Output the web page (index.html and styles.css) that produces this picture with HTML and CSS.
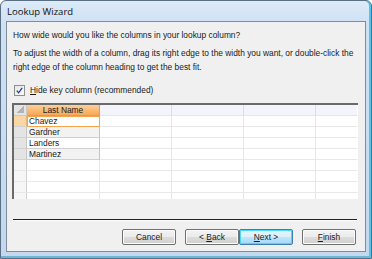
FILE: index.html
```html
<!DOCTYPE html>
<html>
<head>
<meta charset="utf-8">
<link rel="stylesheet" href="styles.css">
</head>
<body>
<div class="window">
  <div class="titlebar">Lookup Wizard</div>
  <div class="client">
    <p class="question">How wide would you like the columns in your lookup column?</p>
    <p class="help">To adjust the width of a column, drag its right edge to the width you want, or double-click the<br>right edge of the column heading to get the best fit.</p>
    <div class="check">
      <span class="box"><svg width="9" height="9" viewBox="0 0 9 9"><path d="M1.8 4.6 L3.6 6.8 L7.2 1.8" fill="none" stroke="#2a3e8c" stroke-width="1.3"/></svg></span>
      <span class="label"><u>H</u>ide key column (recommended)</span>
    </div>
    <div class="grid">
      <div class="hd corner"><span class="tri"></span></div>
      <div class="hd sel-col">Last Name</div>
      <div class="hd"></div><div class="hd"></div><div class="hd"></div><div class="hd last"></div>

      <div class="rs cur"></div><div class="c name active">Chavez</div><div class="c"></div><div class="c"></div><div class="c"></div><div class="c last"></div>
      <div class="rs"></div><div class="c name alt">Gardner</div><div class="c"></div><div class="c"></div><div class="c"></div><div class="c last"></div>
      <div class="rs"></div><div class="c name">Landers</div><div class="c"></div><div class="c"></div><div class="c"></div><div class="c last"></div>
      <div class="rs"></div><div class="c name alt">Martinez</div><div class="c"></div><div class="c"></div><div class="c"></div><div class="c last"></div>
      <div class="rs empty"></div><div class="c"></div><div class="c"></div><div class="c"></div><div class="c"></div><div class="c last"></div>
      <div class="rs empty"></div><div class="c"></div><div class="c"></div><div class="c"></div><div class="c"></div><div class="c last"></div>
      <div class="rs empty"></div><div class="c"></div><div class="c"></div><div class="c"></div><div class="c"></div><div class="c last"></div>
      <div class="rs empty"></div><div class="c"></div><div class="c"></div><div class="c"></div><div class="c"></div><div class="c last"></div>
    </div>
    <div class="sep"></div>
    <div class="buttons">
      <button class="btn">Cancel</button>
      <div class="pair">
        <button class="btn">&lt; <u>B</u>ack</button>
        <button class="btn default"><u>N</u>ext &gt;</button>
      </div>
      <button class="btn"><u>F</u>inish</button>
    </div>
  </div>
</div>
</body>
</html>
```

FILE: styles.css
```css
html, body {
  margin: 0;
  padding: 0;
  background: #ffffff;
}
body {
  font-family: "Liberation Sans", Arial, sans-serif;
  font-size: 8.4px;
  color: #1a1a1a;
}
.window {
  width: 372px;
  height: 259px;
  box-sizing: border-box;
  border: 1px solid #5a6e84;
  border-radius: 6px 6px 0 0;
  background: linear-gradient(to bottom, #dcebf8 0px, #cfe1f3 22px, #c3d8ee 100%);
  box-shadow: inset -2px 0 0 #4cc6ee, inset 0 -2px 0 #6fb6d6;
  display: flex;
  flex-direction: column;
}
.titlebar {
  height: 20px;
  padding-left: 6px;
  display: flex;
  align-items: center;
  font-family: "Open Sans", "Liberation Sans", sans-serif;
  font-size: 9.5px;
  color: #101010;
}
.client {
  margin: 0 5px 6px 5px;
  flex: 1;
  border: 1px solid #7f8c9a;
  background: #f0f0f0;
  padding: 0 0 0 6px;
  display: flex;
  flex-direction: column;
}
.question {
  margin: 7px 0 0 0;
  line-height: 13px;
}
.help {
  margin: 5px 0 0 0;
  line-height: 13.5px;
}
.check {
  margin-top: 11px;
  display: flex;
  align-items: center;
  gap: 5px;
  margin-left: 1px;
}
.box {
  width: 9px;
  height: 9px;
  border: 1px solid #8e8f8f;
  background: linear-gradient(135deg, #e6e6e6, #fbfbfb);
  display: flex;
}
.label {
  line-height: 11px;
}
.grid {
  margin: 7px 0 0 -1px;
  width: 346px;
  height: 96px;
  box-sizing: border-box;
  border-top: 2px solid #6a6a6a;
  border-left: 2px solid #6a6a6a;
  background: #ffffff;
  overflow: hidden;
  display: grid;
  grid-template-columns: 13px 73px 72px 72px 72px 1fr;
  grid-auto-rows: 11px;
}
.grid > div {
  box-sizing: border-box;
  border-right: 1px solid #e8e8e8;
  border-bottom: 1px solid #e8e8e8;
}
.hd {
  background: #f4f5fc;
  border-right-color: #dcdde8 !important;
  border-bottom-color: #e3e4ee !important;
}
.corner {
  background: #e4e4e4 !important;
  border-right-color: #c8c8c8 !important;
  border-bottom-color: #c8c8c8 !important;
  position: relative;
}
.tri {
  position: absolute;
  left: 2px;
  top: 1px;
  right: 2px;
  bottom: 2px;
  background: linear-gradient(to bottom right, transparent 50%, #b4b4b4 50%);
}
.sel-col {
  background: linear-gradient(to bottom, #fccf97, #f7a75a) !important;
  border-right-color: #e39a52 !important;
  border-bottom-color: #e39a52 !important;
  text-align: center;
  line-height: 10px;
  color: #202020;
}
.rs {
  background: #e4e4e4;
  border-right-color: #c6c6c6 !important;
  border-bottom-color: #d2d2d2 !important;
}
.rs.cur {
  background: #f9d6a6;
  border-right-color: #e8b57a !important;
}
.rs.empty {
  background: #f6f6f6;
  border-right-color: #d0d0d0 !important;
  border-bottom-color: #e8e8e8 !important;
}
.c.name {
  padding-left: 2px;
  line-height: 10px;
  border-right-color: #c4c4c4;
  border-bottom-color: #d0d0d0;
}
.c.name.alt {
  background: #f2f2f2;
}
.c.name.active {
  border: 1px solid #f4a44a;
  padding-left: 1px;
  line-height: 9px;
  background: #ffffff;
}
.last {
  border-right-color: #ffffff !important;
}
.sep {
  margin: 20px 0 0 0;
  width: 344px;
  height: 1px;
  background: #202020;
  border-bottom: 1px solid #ffffff;
}
.buttons {
  margin-top: 8px;
  display: flex;
  padding-left: 109px;
  gap: 9px;
}
.pair {
  display: flex;
}
.btn {
  width: 54px;
  height: 16px;
  padding: 0;
  margin: 0;
  border: 1px solid #707070;
  border-radius: 2px;
  background: linear-gradient(to bottom, #f3f3f3 0%, #ebebeb 50%, #dddddd 50%, #cfcfcf 100%);
  box-shadow: inset 0 0 0 1px #fcfcfc;
  font-family: "Liberation Sans", Arial, sans-serif;
  font-size: 8.4px;
  color: #1a1a1a;
}
.btn.default {
  border-color: #3c7fb1;
  box-shadow: inset 0 0 0 1px #48d8fb;
  background: linear-gradient(to bottom, #eaf6fd 0%, #d9f0fc 50%, #bee6fd 50%, #a7d9f5 100%);
}
```
